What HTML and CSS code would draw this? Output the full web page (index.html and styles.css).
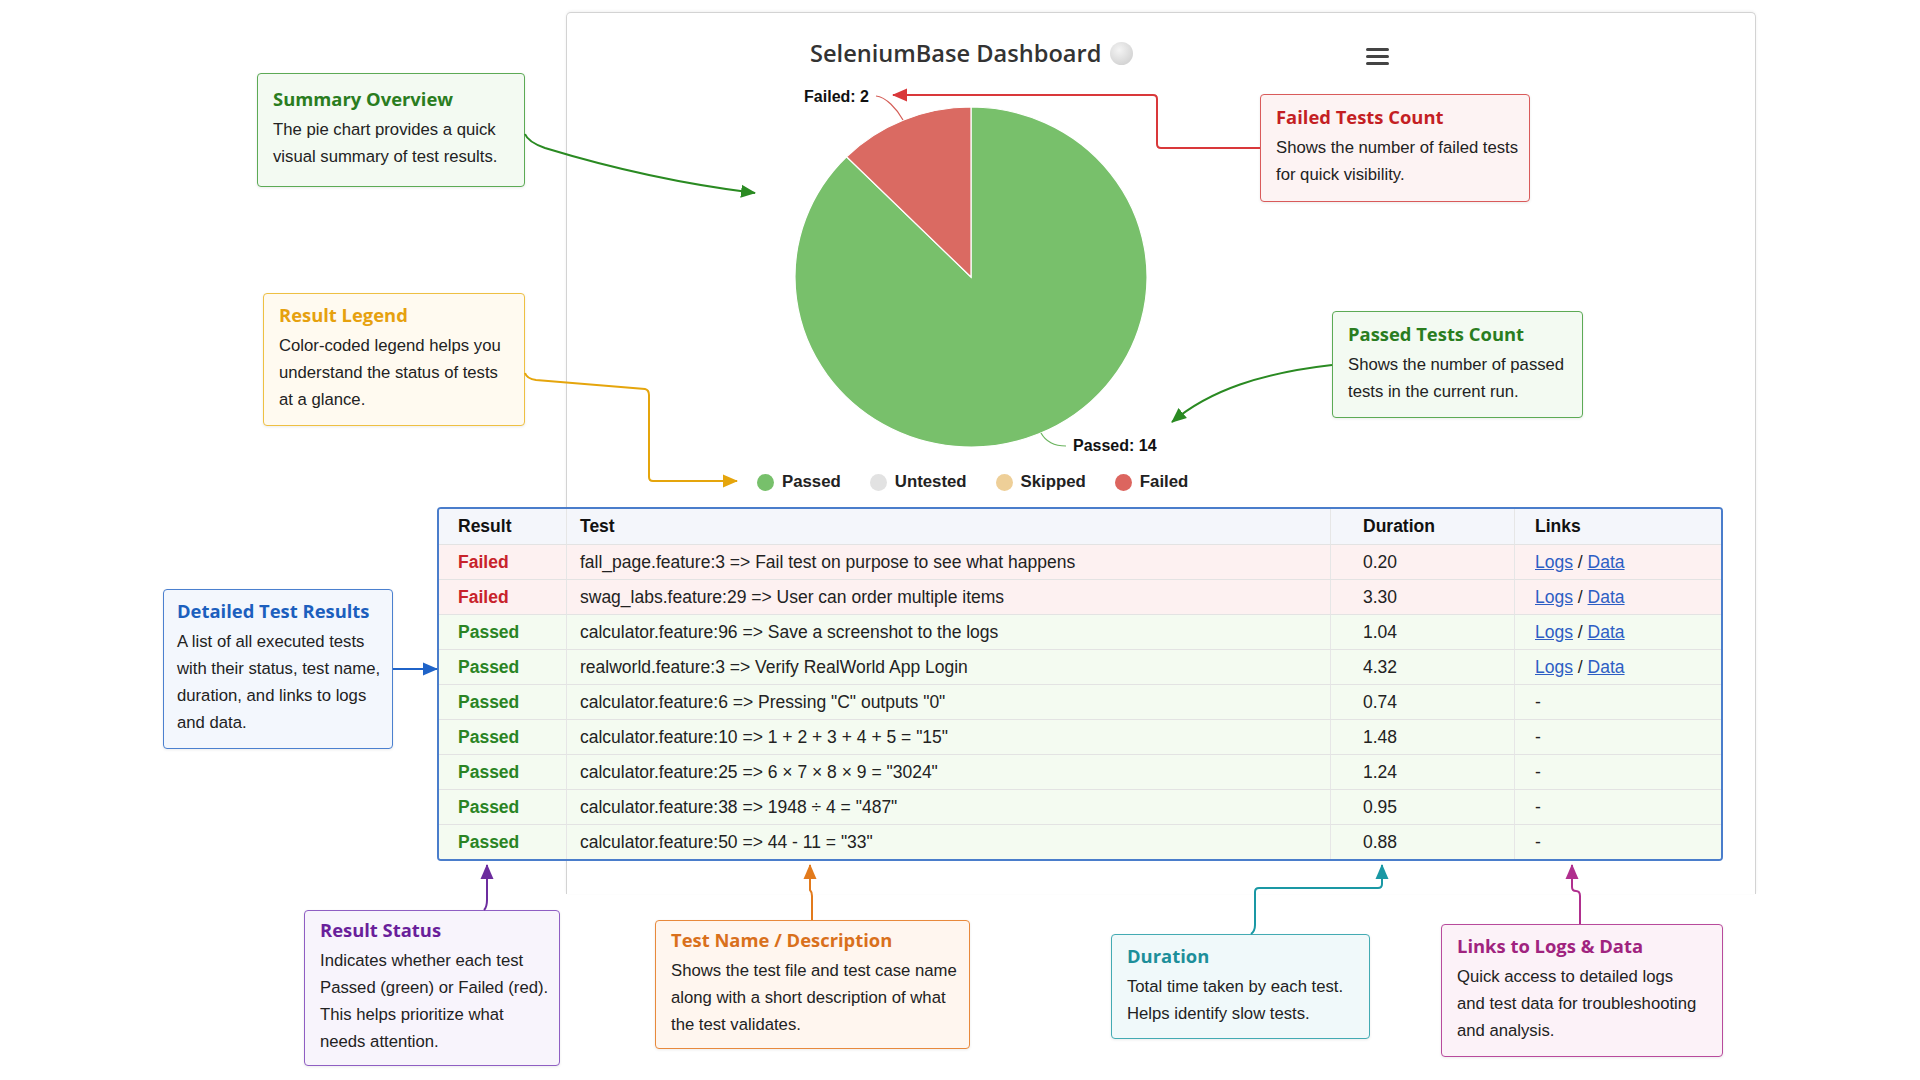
FILE: index.html
```html
<!DOCTYPE html>
<html>

<head>
    <title>SeleniumBase Dashboard</title>
    <meta charset="utf-8" />
    <link rel="stylesheet" href="styles.css">
</head>

<body>
    <div class="canvas">

        <!-- the dashboard window -->
        <section class="dashboard">
            <header class="dash-head">
                <h1 class="dash-title">SeleniumBase Dashboard</h1>
                <span class="status-dot"></span>
                <span class="menu-btn"><i></i><i></i><i></i></span>
            </header>

            <svg class="pie" width="808" height="396" viewBox="0 0 808 396">
                <path class="slice-pass" d="M404,208 L279.55,87.8 A176,170 0 1,0 404,38 Z" />
                <path class="slice-fail" d="M404,208 L404,38 A176,170 0 0,0 279.55,87.8 Z" />
                <path class="leader-fail" d="M309,27 C319,28 330,40 336,51" />
                <path class="leader-pass" d="M474,364 C479,373 487,377 499,377" />
                <text class="pie-label" x="302" y="33" text-anchor="end">Failed: 2</text>
                <text class="pie-label" x="506" y="382">Passed: 14</text>
            </svg>

            <ul class="legend">
                <li><span class="dot dot-pass"></span>Passed</li>
                <li><span class="dot dot-untested"></span>Untested</li>
                <li><span class="dot dot-skipped"></span>Skipped</li>
                <li><span class="dot dot-fail"></span>Failed</li>
            </ul>

            <table class="results">
                <thead>
                    <tr>
                        <th class="col-result">Result</th>
                        <th class="col-test">Test</th>
                        <th class="col-duration">Duration</th>
                        <th class="col-links">Links</th>
                    </tr>
                </thead>
                <tbody>
                    <tr class="row-fail">
                        <td class="col-result">Failed</td>
                        <td class="col-test">fall_page.feature:3 =&gt; Fail test on purpose to see what happens</td>
                        <td class="col-duration">0.20</td>
                        <td class="col-links"><a href="#">Logs</a> / <a href="#">Data</a></td>
                    </tr>
                    <tr class="row-fail">
                        <td class="col-result">Failed</td>
                        <td class="col-test">swag_labs.feature:29 =&gt; User can order multiple items</td>
                        <td class="col-duration">3.30</td>
                        <td class="col-links"><a href="#">Logs</a> / <a href="#">Data</a></td>
                    </tr>
                    <tr class="row-pass">
                        <td class="col-result">Passed</td>
                        <td class="col-test">calculator.feature:96 =&gt; Save a screenshot to the logs</td>
                        <td class="col-duration">1.04</td>
                        <td class="col-links"><a href="#">Logs</a> / <a href="#">Data</a></td>
                    </tr>
                    <tr class="row-pass">
                        <td class="col-result">Passed</td>
                        <td class="col-test">realworld.feature:3 =&gt; Verify RealWorld App Login</td>
                        <td class="col-duration">4.32</td>
                        <td class="col-links"><a href="#">Logs</a> / <a href="#">Data</a></td>
                    </tr>
                    <tr class="row-pass">
                        <td class="col-result">Passed</td>
                        <td class="col-test">calculator.feature:6 =&gt; Pressing "C" outputs "0"</td>
                        <td class="col-duration">0.74</td>
                        <td class="col-links">-</td>
                    </tr>
                    <tr class="row-pass">
                        <td class="col-result">Passed</td>
                        <td class="col-test">calculator.feature:10 =&gt; 1 + 2 + 3 + 4 + 5 = "15"</td>
                        <td class="col-duration">1.48</td>
                        <td class="col-links">-</td>
                    </tr>
                    <tr class="row-pass">
                        <td class="col-result">Passed</td>
                        <td class="col-test">calculator.feature:25 =&gt; 6 × 7 × 8 × 9 = "3024"</td>
                        <td class="col-duration">1.24</td>
                        <td class="col-links">-</td>
                    </tr>
                    <tr class="row-pass">
                        <td class="col-result">Passed</td>
                        <td class="col-test">calculator.feature:38 =&gt; 1948 ÷ 4 = "487"</td>
                        <td class="col-duration">0.95</td>
                        <td class="col-links">-</td>
                    </tr>
                    <tr class="row-pass">
                        <td class="col-result">Passed</td>
                        <td class="col-test">calculator.feature:50 =&gt; 44 - 11 = "33"</td>
                        <td class="col-duration">0.88</td>
                        <td class="col-links">-</td>
                    </tr>
                </tbody>
            </table>
        </section>

        <!-- callouts -->
        <div class="note note-green note-summary">
            <h3>Summary Overview</h3>
            <p>The pie chart provides a quick<br>visual summary of test results.</p>
        </div>
        <div class="note note-yellow note-legend">
            <h3>Result Legend</h3>
            <p>Color-coded legend helps you<br>understand the status of tests<br>at a glance.</p>
        </div>
        <div class="note note-red note-failed">
            <h3>Failed Tests Count</h3>
            <p>Shows the number of failed tests<br>for quick visibility.</p>
        </div>
        <div class="note note-green note-passed">
            <h3>Passed Tests Count</h3>
            <p>Shows the number of passed<br>tests in the current run.</p>
        </div>
        <div class="note note-blue note-detailed">
            <h3>Detailed Test Results</h3>
            <p>A list of all executed tests<br>with their status, test name,<br>duration, and links to logs<br>and data.</p>
        </div>
        <div class="note note-purple note-status">
            <h3>Result Status</h3>
            <p>Indicates whether each test<br>Passed (green) or Failed (red).<br>This helps prioritize what<br>needs attention.</p>
        </div>
        <div class="note note-orange note-testname">
            <h3>Test Name / Description</h3>
            <p>Shows the test file and test case name<br>along with a short description of what<br>the test validates.</p>
        </div>
        <div class="note note-teal note-duration">
            <h3>Duration</h3>
            <p>Total time taken by each test.<br>Helps identify slow tests.</p>
        </div>
        <div class="note note-magenta note-links">
            <h3>Links to Logs &amp; Data</h3>
            <p>Quick access to detailed logs<br>and test data for troubleshooting<br>and analysis.</p>
        </div>

        <!-- arrows -->
        <svg class="connectors" width="1920" height="1080" viewBox="0 0 1920 1080">
            <defs>
                <marker id="m-green" markerUnits="userSpaceOnUse" markerWidth="15" markerHeight="14" viewBox="0 0 15 14" refX="14" refY="7" orient="auto"><path d="M0,0.5 L15,7 L0,13.5 Z" fill="#2a8a22" /></marker>
                <marker id="m-yellow" markerUnits="userSpaceOnUse" markerWidth="15" markerHeight="14" viewBox="0 0 15 14" refX="14" refY="7" orient="auto"><path d="M0,0.5 L15,7 L0,13.5 Z" fill="#e5a50c" /></marker>
                <marker id="m-red" markerUnits="userSpaceOnUse" markerWidth="15" markerHeight="14" viewBox="0 0 15 14" refX="14" refY="7" orient="auto"><path d="M0,0.5 L15,7 L0,13.5 Z" fill="#d9383a" /></marker>
                <marker id="m-blue" markerUnits="userSpaceOnUse" markerWidth="15" markerHeight="14" viewBox="0 0 15 14" refX="14" refY="7" orient="auto"><path d="M0,0.5 L15,7 L0,13.5 Z" fill="#1f63c8" /></marker>
                <marker id="m-purple" markerUnits="userSpaceOnUse" markerWidth="15" markerHeight="14" viewBox="0 0 15 14" refX="14" refY="7" orient="auto"><path d="M0,0.5 L15,7 L0,13.5 Z" fill="#6c2c9e" /></marker>
                <marker id="m-orange" markerUnits="userSpaceOnUse" markerWidth="15" markerHeight="14" viewBox="0 0 15 14" refX="14" refY="7" orient="auto"><path d="M0,0.5 L15,7 L0,13.5 Z" fill="#e27a1c" /></marker>
                <marker id="m-teal" markerUnits="userSpaceOnUse" markerWidth="15" markerHeight="14" viewBox="0 0 15 14" refX="14" refY="7" orient="auto"><path d="M0,0.5 L15,7 L0,13.5 Z" fill="#1a98a4" /></marker>
                <marker id="m-magenta" markerUnits="userSpaceOnUse" markerWidth="15" markerHeight="14" viewBox="0 0 15 14" refX="14" refY="7" orient="auto"><path d="M0,0.5 L15,7 L0,13.5 Z" fill="#b02f8e" /></marker>
            </defs>
            <path class="line-green" d="M525,134 Q528,142 545,148 Q650,180 755,193" marker-end="url(#m-green)" />
            <path class="line-yellow" d="M525,373 Q527,379 536,380 L645,389 Q649,390 649,395 L649,477 Q649,481 653,481 L737,481" marker-end="url(#m-yellow)" />
            <path class="line-red" d="M1260,148 L1161,148 Q1157,148 1157,144 L1157,99 Q1157,95 1153,95 L893,95" marker-end="url(#m-red)" />
            <path class="line-green" d="M1332,365 C1262,373 1210,390 1172,422" marker-end="url(#m-green)" />
            <path class="line-blue" d="M393,669 L437,669" marker-end="url(#m-blue)" />
            <path class="line-purple" d="M484,910 Q487,907 487,900 L487,865" marker-end="url(#m-purple)" />
            <path class="line-orange" d="M812,920 L812,896 Q812,892 810,890 L810,865" marker-end="url(#m-orange)" />
            <path class="line-teal" d="M1251,934 Q1255,931 1255,925 L1255,892 Q1255,888 1259,888 L1378,888 Q1382,888 1382,884 L1382,865" marker-end="url(#m-teal)" />
            <path class="line-magenta" d="M1580,924 L1580,896 Q1580,891 1576,891 Q1572,891 1572,887 L1572,865" marker-end="url(#m-magenta)" />
        </svg>
    </div>
</body>

</html>
```

FILE: styles.css
```css
body {
    margin: 0;
    padding: 0;
    background-color: #fff;
    font-family: "Liberation Sans", Arial, sans-serif;
    color: #222;
    overflow: hidden;
}

.canvas {
    position: relative;
    width: 1920px;
    height: 1080px;
}

/* dashboard window */
.dashboard {
    position: absolute;
    left: 566px;
    top: 12px;
    width: 1190px;
    height: 882px;
    box-sizing: border-box;
    border: 1px solid #d3d3d3;
    border-bottom: none;
    border-radius: 5px 5px 0 0;
    box-shadow: 0 -1px 3px rgba(0, 0, 0, 0.06);
    background-color: #fff;
}

.dash-head {
    display: flex;
    align-items: center;
    padding: 24px 0 0 243px;
}

.dash-title {
    margin: 0;
    font-family: "Open Sans", "Noto Sans", sans-serif;
    font-weight: 600;
    font-size: 23.6px;
    line-height: 32px;
    color: #333;
}

.status-dot {
    width: 23px;
    height: 23px;
    margin-left: 9px;
    border-radius: 50%;
    background: radial-gradient(circle at 40% 35%, #f4f4f4, #d6d6d6 70%, #cacaca);
}

.menu-btn {
    display: flex;
    flex-direction: column;
    gap: 4px;
    margin-left: 233px;
    margin-top: 6px;
}

.menu-btn i {
    display: block;
    width: 23px;
    height: 3px;
    border-radius: 2px;
    background-color: #444;
}

/* pie chart */
.pie {
    display: block;
}

.slice-pass {
    fill: #78c06b;
    stroke: #fff;
    stroke-width: 1.2;
}

.slice-fail {
    fill: #da6a62;
    stroke: #fff;
    stroke-width: 1.2;
}

.leader-fail,
.leader-pass {
    fill: none;
    stroke-width: 1.2;
}

.leader-fail {
    stroke: #d45e57;
}

.leader-pass {
    stroke: #6bb45f;
}

.pie-label {
    font-family: "Liberation Sans", Arial, sans-serif;
    font-weight: bold;
    font-size: 16px;
    fill: #111;
}

/* legend */
.legend {
    display: flex;
    gap: 29px;
    list-style: none;
    margin: 7px 0 0;
    padding: 0 0 0 190px;
    height: 20px;
}

.legend li {
    display: flex;
    align-items: center;
    gap: 8px;
    font-weight: bold;
    font-size: 16.8px;
    color: #222;
}

.dot {
    width: 17px;
    height: 17px;
    border-radius: 50%;
}

.dot-pass {
    background-color: #77c06b;
}

.dot-untested {
    background-color: #e2e2e2;
}

.dot-skipped {
    background-color: #eecf98;
}

.dot-fail {
    background-color: #dc655f;
}

/* results table */
.results {
    margin: 15px 0 0 -130px;
    width: 1286px;
    table-layout: fixed;
    border-collapse: separate;
    border-spacing: 0;
    border: 2px solid #4a7dcb;
    border-radius: 4px;
    overflow: hidden;
    font-size: 17.5px;
    background-color: #fff;
}

.results th,
.results td {
    box-sizing: border-box;
    height: 35px;
    padding: 0;
    text-align: left;
    vertical-align: middle;
    border-bottom: 1px solid #e3e3e3;
    white-space: nowrap;
}

.results th {
    height: 36px;
    font-weight: bold;
    color: #111;
    background-color: #f4f6fb;
}

.results tbody tr:last-child td {
    border-bottom: none;
    height: 34px;
}

.results .col-test,
.results .col-duration,
.results .col-links {
    border-left: 1px solid #e6e6e6;
}

.col-result {
    width: 127px;
    padding-left: 19px !important;
}

.col-test {
    width: 764px;
    padding-left: 13px !important;
}

.col-duration {
    width: 184px;
    padding-left: 32px !important;
}

.col-links {
    width: 207px;
    padding-left: 20px !important;
}

.row-fail td {
    background-color: #fdf1f1;
}

.row-pass td {
    background-color: #f4fbf1;
}

.row-fail .col-result {
    color: #c8232b;
    font-weight: bold;
}

.row-pass .col-result {
    color: #2a8424;
    font-weight: bold;
}

.results a {
    color: #2d5ec4;
}

/* callouts */
.note {
    position: absolute;
    box-sizing: border-box;
    display: flex;
    flex-direction: column;
    justify-content: center;
    padding: 0 15px 3px;
    border: 1.5px solid;
    border-radius: 4px;
    box-shadow: 0 1px 3px rgba(0, 0, 0, 0.08);
}

.note h3 {
    margin: 0 0 5px;
    font-family: "Open Sans", "Noto Sans", sans-serif;
    font-weight: 700;
    font-size: 18.4px;
    line-height: 24px;
}

.note p {
    margin: 0;
    font-size: 16.7px;
    line-height: 27px;
    color: #222;
    white-space: nowrap;
}

.note-green {
    border-color: #5caa55;
    background-color: #f3faf2;
}

.note-green h3 {
    color: #2a7d1f;
}

.note-yellow {
    border-color: #eec043;
    background-color: #fffaf0;
}

.note-yellow h3 {
    color: #e6a10f;
}

.note-red {
    border-color: #d95a5a;
    background-color: #fdf3f3;
}

.note-red h3 {
    color: #c41f24;
}

.note-blue {
    border-color: #4b80cf;
    background-color: #f3f7fd;
}

.note-blue h3 {
    color: #1c5fbe;
}

.note-purple {
    border-color: #8f5ec3;
    background-color: #f8f4fc;
}

.note-purple h3 {
    color: #6a1f9b;
}

.note-orange {
    border-color: #e8893c;
    background-color: #fff6ef;
}

.note-orange h3 {
    color: #d9701c;
}

.note-teal {
    border-color: #43abb3;
    background-color: #f0f9fa;
}

.note-teal h3 {
    color: #1d8f9a;
}

.note-magenta {
    border-color: #b84a9c;
    background-color: #fcf2f8;
}

.note-magenta h3 {
    color: #a0237f;
}

.note-summary {
    left: 257px;
    top: 73px;
    width: 268px;
    height: 114px;
}

.note-legend {
    left: 263px;
    top: 293px;
    width: 262px;
    height: 133px;
}

.note-failed {
    left: 1260px;
    top: 94px;
    width: 270px;
    height: 108px;
}

.note-passed {
    left: 1332px;
    top: 311px;
    width: 251px;
    height: 107px;
}

.note-detailed {
    left: 163px;
    top: 589px;
    width: 230px;
    height: 160px;
    padding-left: 13px;
}

.note-status {
    left: 304px;
    top: 910px;
    width: 256px;
    height: 156px;
}

.note-testname {
    left: 655px;
    top: 920px;
    width: 315px;
    height: 129px;
}

.note-duration {
    left: 1111px;
    top: 934px;
    width: 259px;
    height: 105px;
}

.note-links {
    left: 1441px;
    top: 924px;
    width: 282px;
    height: 133px;
}

/* arrows over everything */
.connectors {
    position: absolute;
    left: 0;
    top: 0;
    pointer-events: none;
}

.connectors > path {
    fill: none;
    stroke-width: 2;
}

.line-green {
    stroke: #2a8a22;
}

.line-yellow {
    stroke: #e5a50c;
}

.line-red {
    stroke: #d9383a;
}

.line-blue {
    stroke: #1f63c8;
}

.line-purple {
    stroke: #6c2c9e;
}

.line-orange {
    stroke: #e27a1c;
}

.line-teal {
    stroke: #1a98a4;
}

.line-magenta {
    stroke: #b02f8e;
}
```
